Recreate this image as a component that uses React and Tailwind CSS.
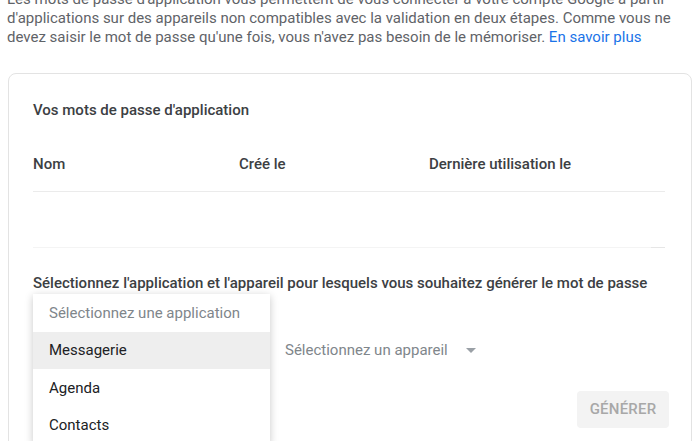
import React from 'react';

const menuItems = [
  { label: 'Sélectionnez une application', muted: true },
  { label: 'Messagerie', active: true },
  { label: 'Agenda' },
  { label: 'Contacts' },
];

export default function App() {
  return (
    <div className="w-[700px] h-[441px] overflow-hidden bg-white font-['Roboto',_'Liberation_Sans',_sans-serif]">
      {/* Intro text */}
      <p className="mt-[-10px] px-[7px] text-[15px] leading-[19px] text-[#5f6368]">
        Les mots de passe d'application vous permettent de vous connecter à votre compte Google à partir
        d'applications sur des appareils non compatibles avec la validation en deux étapes. Comme vous ne
        devez saisir le mot de passe qu'une fois, vous n'avez pas besoin de le mémoriser.{' '}
        <a className="text-[#1a73e8]">En savoir plus</a>
      </p>

      {/* Card */}
      <div className="mx-[8px] mt-[26px] h-[400px] rounded-[8px] border border-[#e3e3e3] px-[24px] pt-[26px]">
        <h2 className="text-[15px] leading-[20px] font-medium text-[#3c4043]">
          Vos mots de passe d'application
        </h2>

        <div className="mr-[2px] mt-[34px] grid grid-cols-[206px_190px_1fr] border-b border-[#ebebeb] pb-[17px] text-[15px] leading-[20px] font-medium text-[#3c4043]">
          <span>Nom</span>
          <span>Créé le</span>
          <span>Dernière utilisation le</span>
        </div>
        <div className="mr-[2px] flex h-[56px] items-end border-b border-[#f4f4f4]">
          <div className="ml-auto mb-[-1px] h-px w-[14px] bg-[#e6e6e6]" />
        </div>

        <p className="mt-[25px] text-[15px] leading-[20px] font-medium text-[#3c4043]">
          Sélectionnez l'application et l'appareil pour lesquels vous souhaitez générer le mot de passe
        </p>

        {/* Form */}
        <div className="relative mt-[47px] flex items-center">
          <div className="w-[252px] text-[15px] leading-[20px] text-[#80868b]">Sélectionnez une application</div>
          <div className="flex items-center gap-[18px] text-[15px] leading-[20px] text-[#80868b]">
            <span>Sélectionnez un appareil</span>
            <svg width="10" height="5" viewBox="0 0 10 5" className="mt-px">
              <path d="M0 0h10L5 5z" fill="#9aa0a6" />
            </svg>
          </div>

          {/* Open menu */}
          <div className="absolute left-0 top-[-46px] w-[237px] bg-white shadow-[0_2px_8px_rgba(0,0,0,0.22)]">
            {menuItems.map((item) => (
              <div
                key={item.label}
                className={`flex h-[37.5px] items-center px-[16px] text-[15px] ${
                  item.active ? 'bg-[#eeeeee]' : ''
                } ${item.muted ? 'text-[#80868b]' : 'text-[#202124]'}`}
              >
                {item.label}
              </div>
            ))}
          </div>
        </div>

        <div className="mr-[-2px] mt-[31px] flex justify-end">
          <button className="h-[37px] w-[92px] rounded-[4px] bg-[#f3f3f3] text-[15px] font-medium tracking-[0.2px] text-[#a8a8a8]">
            GÉNÉRER
          </button>
        </div>
      </div>
    </div>
  );
}
